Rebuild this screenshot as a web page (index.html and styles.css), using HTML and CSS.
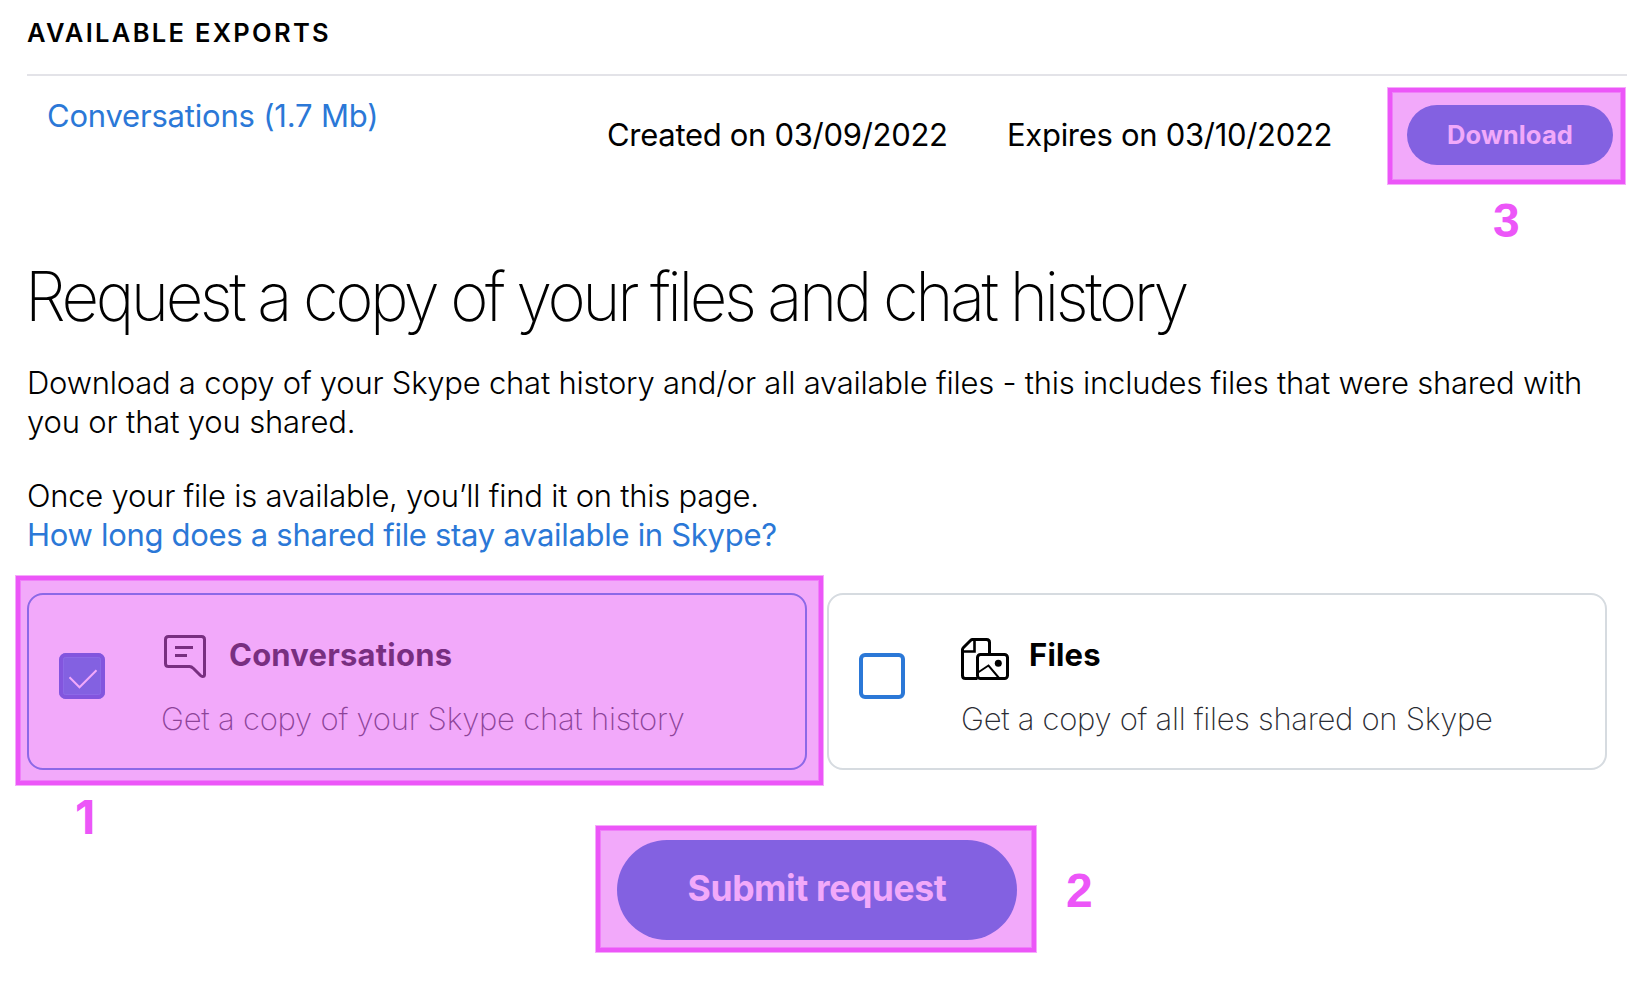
FILE: index.html
```html
<!DOCTYPE html>
<html lang="en">
<head>
<meta charset="utf-8">
<title>Export files and chat history</title>
<link rel="stylesheet" href="styles.css">
</head>
<body>
<main class="page">
  <h2 class="section-title">AVAILABLE EXPORTS</h2>
  <section class="export">
    <a class="export-name">Conversations (1.7 Mb)</a>
    <span class="export-date created">Created on 03/09/2022</span>
    <span class="export-date expires">Expires on 03/10/2022</span>
    <div class="button download"><span>Download</span>
      <i class="mark mark-download"></i><b class="step step-3">3</b>
    </div>
  </section>

  <h1 class="title">Request a copy of your files and chat history</h1>
  <p class="text intro"><span class="line-a">Download a copy of your Skype chat history and/or all available files - this includes files that were shared with</span><br><span class="line-b">you or that you shared.</span></p>
  <p class="text note">Once your file is available, you’ll find it on this page.<br><a class="help">How long does a shared file stay available in Skype?</a></p>

  <section class="cards">
    <div class="card card-chat">
      <div class="check checked">
        <svg width="46" height="46" viewBox="0 0 46 46" fill="none"><rect x="4.5" y="4.5" width="37" height="37" rx="2" stroke="#2b78d7"/><path d="M10.5 24.300 20.5 34.300 37.5 17.300" stroke="#fff" stroke-width="2"/></svg>
      </div>
      <div class="card-body">
        <div class="card-head">
          <div class="icon icon-chat">
            <svg width="42" height="43" viewBox="0 0 42 43" fill="none" stroke="#000" stroke-width="3"><path d="M4.5 1.5H37.5Q40.500 1.500 40.500 4.500V39.500Q40.500 41.500 38.500 41.500Q37.500 41.500 36.500 40.500L29.500 33.500Q27.500 31.500 25.500 31.500H4.500Q1.500 31.500 1.500 28.500V4.500Q1.500 1.500 4.500 1.500Z"/><path d="M11 12.500H29M11 20.500H23"/></svg>
          </div>
          <strong class="card-title">Conversations</strong>
        </div>
        <div class="card-sub sub-chat">Get a copy of your Skype chat history</div>
      </div>
      <i class="mark mark-card"></i><b class="step step-1">1</b>
    </div>
    <div class="card">
      <div class="check"></div>
      <div class="card-body">
        <div class="card-head">
          <div class="icon icon-files">
            <svg width="48" height="42" viewBox="0 0 48 42" fill="none" stroke="#000" stroke-width="3"><path d="M16.500 40.500H4.500Q1.500 40.500 1.500 37.500V11.500Q1.500 10.500 2.500 9.500L9.500 2.500Q10.500 1.500 11.500 1.500H25.500Q28.500 1.500 28.500 4.500V16"/><path d="M13.500 2V13.500H2" stroke-width="2.600"/><rect x="16.500" y="16.500" width="30" height="24" rx="3"/><path d="M17 34.500 27.500 27.500 38 40" stroke-width="2"/><circle cx="37.300" cy="25.300" r="3.500" fill="#000" stroke="none"/></svg>
          </div>
          <strong class="card-title">Files</strong>
        </div>
        <div class="card-sub sub-files">Get a copy of all files shared on Skype</div>
      </div>
    </div>
  </section>

  <div class="button submit"><span>Submit request</span>
    <i class="mark mark-submit"></i><b class="step step-2">2</b>
  </div>
</main>
</body>
</html>
```
FILE: styles.css
```css
* { box-sizing: border-box; }
body {
  margin: 0;
  background: #fff;
  color: #000;
  font: 400 31px/39px Inter, "Liberation Sans", sans-serif;
}
.page {
  display: flex;
  flex-direction: column;
  width: 1646px;
  height: 990px;
  padding: 14px 19px 0 27px;
  overflow: hidden;
  white-space: nowrap;
}
.section-title {
  flex: none;
  height: 62px;
  margin: 0;
  border-bottom: 2px solid #e3e3e8;
  font-size: 25.5px;
  font-weight: 600;
  line-height: 38px;
  letter-spacing: 2.3px;
}
.export {
  display: flex;
  align-items: flex-start;
  height: 180px;
  padding-left: 20px;
}
.export-name, .help { color: #2b78d7; }
.export-name { width: 560px; margin-top: 20px; letter-spacing: -0.2px; }
.export-date { margin-top: 39px; letter-spacing: -0.3px; }
.created { width: 400px; }
.expires { width: 400px; }

.button {
  position: relative;
  display: flex;
  align-items: center;
  justify-content: center;
  background: #1869cb;
  color: #fff;
  font-weight: 700;
}
.download {
  width: 206px;
  height: 60px;
  margin-top: 29px;
  border-radius: 30px;
  font-size: 25.5px;
  letter-spacing: 0.16px;
}
.download span { padding-bottom: 1px; }
.submit {
  flex: none;
  width: 400px;
  height: 100px;
  margin: 70px 0 0 590px;
  border-radius: 50px;
  font-size: 35.5px;
  letter-spacing: -0.4px;
}
.submit span { padding-bottom: 3px; }

.title {
  flex: none;
  height: 80px;
  margin: 0 0 27px -2px;
  font-size: 68px;
  font-weight: 200;
  line-height: 80px;
  letter-spacing: -3.6px;
  word-spacing: -1px;
  transform: scaleX(0.96);
  transform-origin: 0 0;
}
.text { margin: 0; font-weight: 300; }
.intro { letter-spacing: -0.23px; margin-bottom: 35px; }
.line-b { letter-spacing: -0.16px; }
.note { letter-spacing: -0.24px; margin-bottom: 39px; }
.help { font-weight: 400; letter-spacing: -0.3px; }

.cards { display: flex; gap: 20px; }
.card {
  position: relative;
  display: flex;
  gap: 56px;
  width: 780px;
  height: 177px;
  padding: 38px 0 0 30px;
  border: 2px solid #d6dbe0;
  border-radius: 16px;
}
.card-chat { border-color: #2b78d7; }
.check {
  width: 46px;
  height: 46px;
  margin-top: 20px;
  border: 4px solid #2b78d7;
  border-radius: 6px;
}
.checked { border: 0; border-radius: 7px; background: #1869cb; box-shadow: inset 0 0 0 4px #1850c4; }
.check svg, .icon svg { display: block; }
.card-head { display: flex; height: 44px; margin-bottom: 22px; }
.icon { width: 68px; }
.icon-chat { padding: 2px 0 0 3px; }
.icon-files { padding: 5px 0 0 0; }
.card-title { font-weight: 700; line-height: 44px; letter-spacing: 0.2px; }
.card-sub { color: #2b2c33; font-weight: 200; }
.sub-chat { letter-spacing: -0.22px; }
.sub-files { letter-spacing: -0.29px; }

/* Numbered highlights laid over the controls */
.mark {
  position: absolute;
  border: 4px solid #ec56f8;
  background: rgba(230, 91, 245, 0.52);
  background-clip: padding-box;
  box-shadow: 0 0 0 1px rgba(236, 86, 248, 0.5), inset 0 0 0 1px rgba(236, 86, 248, 0.5);
}
.mark-download { inset: -17px -12px -19px -19px; }
.mark-card { inset: -19px -18px -17px -13px; }
.mark-submit { inset: -14px -19px -12px -21px; }
.step {
  position: absolute;
  color: #ec56f8;
  font: 700 48px/48px "Liberation Sans", Arial, sans-serif;
  letter-spacing: 0;
}
.step-1 { left: 46px; top: 198px; font-family: Inter, sans-serif; font-size: 47px; }
.step-2 { left: 449px; top: 27px; }
.step-3 { left: 86px; top: 92px; }
```
